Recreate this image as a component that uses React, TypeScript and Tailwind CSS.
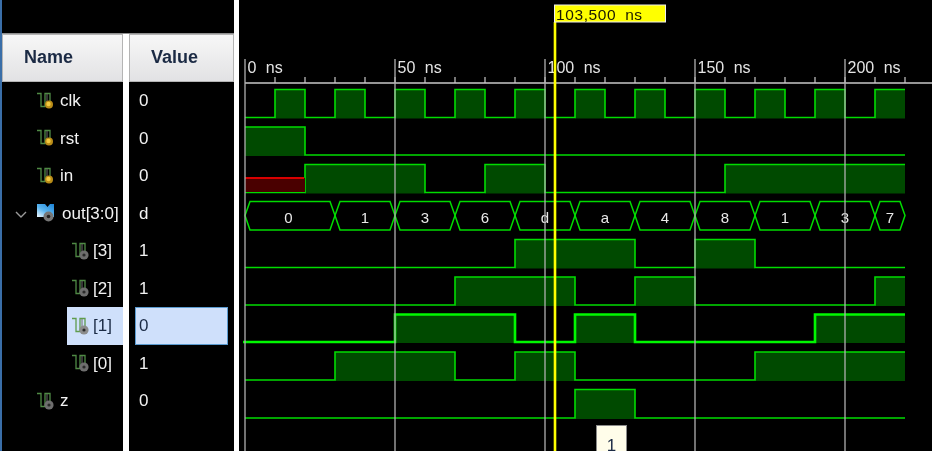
import React from "react";

const F = "font-['Liberation_Sans',Arial,sans-serif]";

function SignalIcon({ kind, bright }: { kind: "gold" | "gray"; bright?: boolean }) {
  const wave = bright ? "#5f9c4c" : "#4f8a45";
  return (
    <svg width="18" height="18" viewBox="0 0 18 18" className="shrink-0">
      <path d="M1 1.5H5V14.5H9V1.5H14V10" fill="none" stroke={wave} strokeWidth="1.3" />
      <path d="M11 2V10" fill="none" stroke="#6f6f6f" strokeWidth="1" />
      {kind === "gold" ? (
        <>
          <circle cx="13" cy="12.5" r="4" fill="#b98c18" />
          <circle cx="12.5" cy="12" r="2.2" fill="#f2c93f" />
        </>
      ) : (
        <>
          <circle cx="13" cy="13" r="4.6" fill={bright ? "#8c8c8c" : "#6e6e6e"} />
          <circle cx="13" cy="13" r="1.6" fill="#2a2a2a" />
        </>
      )}
    </svg>
  );
}

function BusIcon() {
  return (
    <svg width="20" height="19" viewBox="0 0 20 19" className="shrink-0">
      <defs>
        <linearGradient id="busFill" x1="0.9" y1="0" x2="0.1" y2="1">
          <stop offset="0" stopColor="#1f86d8" />
          <stop offset="0.55" stopColor="#5cb6f0" />
          <stop offset="1" stopColor="#e4f3fd" />
        </linearGradient>
      </defs>
      <path d="M1 0H9L11.5 3L14 0H18V13H1Z" fill="url(#busFill)" />
      <circle cx="12.5" cy="12.5" r="5" fill="#777" />
      <circle cx="12.5" cy="12.5" r="1.8" fill="#222" />
    </svg>
  );
}

type Row = { name: string; value: string; indent: "top" | "sub"; icon: "gold" | "gray" | "bus"; selected?: boolean };

const rows: Row[] = [
  { name: "clk", value: "0", indent: "top", icon: "gold" },
  { name: "rst", value: "0", indent: "top", icon: "gold" },
  { name: "in", value: "0", indent: "top", icon: "gold" },
  { name: "out[3:0]", value: "d", indent: "top", icon: "bus" },
  { name: "[3]", value: "1", indent: "sub", icon: "gray" },
  { name: "[2]", value: "1", indent: "sub", icon: "gray" },
  { name: "[1]", value: "0", indent: "sub", icon: "gray", selected: true },
  { name: "[0]", value: "1", indent: "sub", icon: "gray" },
  { name: "z", value: "0", indent: "top", icon: "gray" },
];

function NameCell({ r }: { r: Row }) {
  const sub = r.indent === "sub";
  return (
    <div className={`relative flex h-[37.5px] items-center ${sub ? "pl-[65px]" : "pl-[34px]"}`}>
      {r.icon === "bus" && (
        <svg width="12" height="7" viewBox="0 0 12 7" className="absolute left-[13px] top-[16px]">
          <path d="M1 1L6 6L11 1" fill="none" stroke="#9a9a9a" strokeWidth="1.4" />
        </svg>
      )}
      <div
        className={`flex h-full grow items-center ${sub ? "gap-[4px] pl-[4px]" : "gap-[6px]"} ${
          r.selected ? "bg-[#cfe0fb] text-[#1a2a44]" : "text-[#f2f2f2]"
        }`}
      >
        {r.icon === "bus" ? <BusIcon /> : <SignalIcon kind={r.icon} bright={r.selected} />}
        <span className="text-[17px] leading-none">{r.name}</span>
      </div>
    </div>
  );
}

function ValueCell({ r }: { r: Row }) {
  return (
    <div
      className={`ml-[6px] mr-[6px] flex h-[37.5px] items-center border pl-[3px] text-[17px] leading-none ${
        r.selected ? "border-[#5b9bd0] bg-[#cfe0fb] text-[#1a2a44]" : "border-transparent text-[#f2f2f2]"
      }`}
    >
      {r.value}
    </div>
  );
}

const X0 = 245;
const XEND = 905;
const LINE = "#00dc00";
const FILL = "#004a00";

type Wave = { top: number; low: number; high: [number, number][]; thick?: boolean; start?: number };

const waves: Wave[] = [
  {
    top: 89.5,
    low: 117.5,
    high: [
      [275, 305], [335, 365], [395, 425], [455, 485], [515, 545], [575, 605],
      [635, 665], [695, 725], [755, 785], [815, 845], [875, 905],
    ],
  },
  { top: 127, low: 155, high: [[245, 305]] },
  { top: 164.5, low: 192.5, high: [[305, 425], [485, 545], [725, 905]] },
  { top: 239.5, low: 267.5, high: [[515, 635], [695, 755]] },
  { top: 277, low: 305, high: [[455, 575], [635, 695], [875, 905]] },
  { top: 314.5, low: 342, high: [[395, 515], [575, 635], [815, 905]], thick: true, start: 243 },
  { top: 352, low: 380, high: [[335, 455], [515, 575], [755, 905]] },
  { top: 389.5, low: 418, high: [[575, 635]] },
];

function wavePath(w: Wave) {
  let x = w.start ?? X0;
  let d = "";
  let y = w.low;
  if (w.high[0][0] === X0 && !w.start) {
    y = w.top;
  }
  d = `M${x} ${y}`;
  for (const [a, b] of w.high) {
    if (a > x) d += `H${a}`;
    d += `V${w.top}H${b}`;
    if (b < XEND) d += `V${w.low}`;
    x = b;
  }
  if (x < XEND) d += `H${XEND}`;
  return d;
}

function WaveRow({ w }: { w: Wave }) {
  return (
    <g>
      {w.high.map(([a, b]) => (
        <rect key={a} x={a} y={w.top} width={b - a} height={w.low - w.top + 1} fill={FILL} />
      ))}
      <path
        d={wavePath(w)}
        fill="none"
        stroke={w.thick ? "#00f800" : LINE}
        strokeWidth={w.thick ? 2.6 : 1.6}
      />
    </g>
  );
}

const busEdges = [245, 335, 395, 455, 515, 575, 635, 695, 755, 815, 875, 905];
const busValues = ["0", "1", "3", "6", "d", "a", "4", "8", "1", "3", "7"];

function Bus() {
  const top = 201.5;
  const bot = 230;
  const mid = 215.5;
  return (
    <g>
      {busValues.map((v, i) => {
        const a = busEdges[i];
        const b = busEdges[i + 1];
        const d = `M${a} ${mid}L${a + 5} ${top}H${b - 5}L${b} ${mid}L${b - 5} ${bot}H${a + 5}Z`;
        return (
          <g key={i}>
            <path d={d} fill="none" stroke={LINE} strokeWidth="1.5" />
            <text x={(a + b) / 2 - (i === 0 ? 1.5 : 0)} y="222.5" textAnchor="middle" fontSize="15" fill="#e8e8e8">
              {v}
            </text>
          </g>
        );
      })}
    </g>
  );
}

function Ruler() {
  const minor: number[] = [];
  for (let x = 275; x <= 905; x += 30) minor.push(x);
  const labels = [
    [245, "0 ns"],
    [395, "50 ns"],
    [545, "100 ns"],
    [695, "150 ns"],
    [845, "200 ns"],
  ] as const;
  return (
    <g>
      <line x1="245" y1="83" x2="932" y2="83" stroke="#c8c8c8" strokeWidth="1.4" />
      {minor.map((x) => (
        <line key={x} x1={x} y1="77" x2={x} y2="83" stroke="#c8c8c8" strokeWidth="1.2" />
      ))}
      {labels.map(([x, t]) => (
        <text key={x} x={x + 2.5} y="73" fontSize="16" fill="#e4e4e4" style={{ wordSpacing: "5px" }}>
          {t}
        </text>
      ))}
    </g>
  );
}

function Waveform() {
  const grid = [245, 395, 545, 695, 845];
  return (
    <svg width="693" height="451" viewBox="239 0 693 451" className="block">
      <Ruler />
      {waves.map((w, i) => (
        <WaveRow key={i} w={w} />
      ))}
      <rect x="245" y="178" width="60" height="14" fill="#4a0000" />
      <line x1="245" y1="178" x2="304" y2="178" stroke="#d80000" strokeWidth="2" />
      <Bus />
      {grid.map((x) => (
        <line key={x} x1={x} y1="59" x2={x} y2="451" stroke="#b0b0b0" strokeWidth="1.3" />
      ))}
      <line x1="555" y1="22" x2="555" y2="451" stroke="#ffff00" strokeWidth="2.6" />
      <rect x="554.5" y="5" width="111" height="17" fill="#ffff00" stroke="#eeeeee" strokeWidth="1" />
      <text x="556" y="20" fontSize="15.5" fill="#1a1a00" style={{ letterSpacing: "0.6px", wordSpacing: "4px" }}>
        103,500 ns
      </text>
    </svg>
  );
}

export default function App() {
  return (
    <div className={`relative flex h-[451px] w-[932px] overflow-hidden bg-black blur-[0.35px] ${F}`}>
      <div className="flex w-[234px] shrink-0 flex-col border-l-2 border-[#3a6ea8]">
        <div className="h-[34px] shrink-0 border-b border-[#8f8f8f]" />
        <div className="flex grow">
          <div className="flex w-[121px] shrink-0 flex-col">
            <div className="flex h-[48px] items-center border border-[#b4b4b4] bg-gradient-to-b from-[#f7f7f7] to-[#e2e2e4] pb-[1px] pl-[21px] text-[18px] font-bold text-[#1b2a44]">
              Name
            </div>
            {rows.map((r) => (
              <NameCell key={r.name} r={r} />
            ))}
          </div>
          <div className="w-[6px] shrink-0 bg-white" />
          <div className="flex w-[105px] shrink-0 flex-col">
            <div className="flex h-[48px] items-center border border-[#b4b4b4] bg-gradient-to-b from-[#f7f7f7] to-[#e2e2e4] pb-[1px] pl-[21px] text-[18px] font-bold text-[#1b2a44]">
              Value
            </div>
            {rows.map((r) => (
              <ValueCell key={r.name} r={r} />
            ))}
          </div>
        </div>
      </div>
      <div className="w-[5px] shrink-0 bg-white" />
      <Waveform />
      <div className="absolute left-[596px] top-[425px] flex h-[32px] w-[31px] justify-center border border-[#8a8a8a] bg-[#fffdea] pt-[11px] text-[17px] leading-none text-[#1b2a44]">
        1
      </div>
    </div>
  );
}
